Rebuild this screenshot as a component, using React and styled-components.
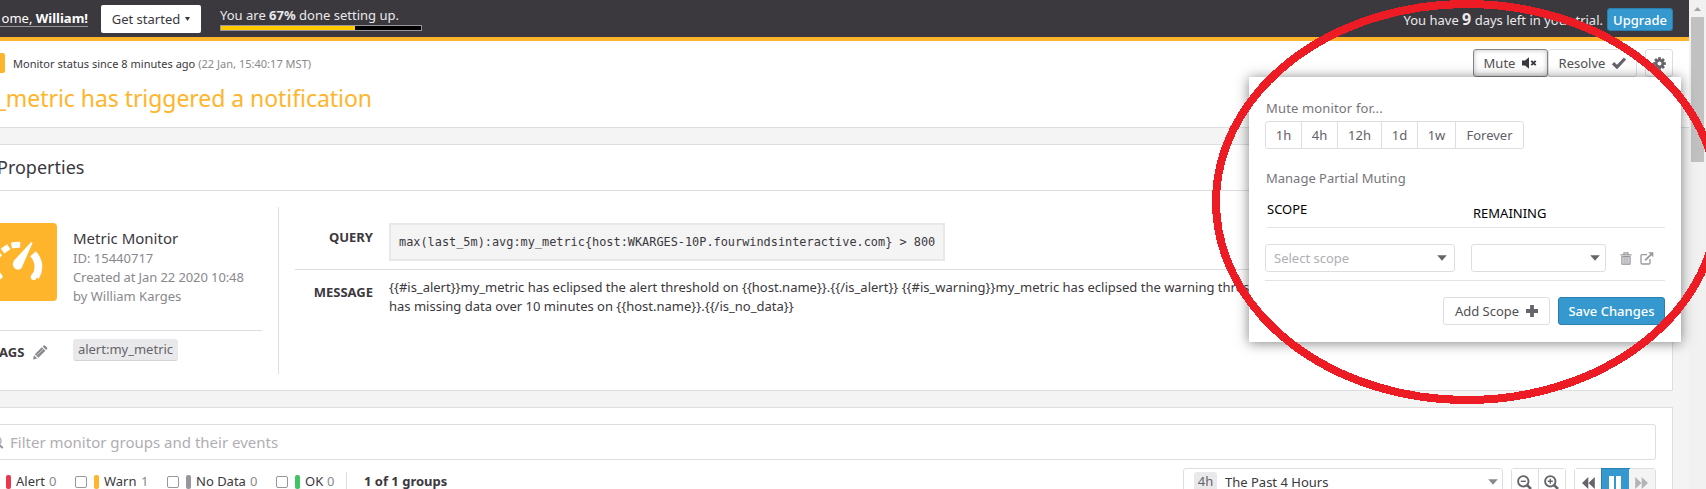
import React from "react";
import styled, { createGlobalStyle } from "styled-components";

const Global = createGlobalStyle`
  *, *::before, *::after { box-sizing: border-box; }
  body { margin: 0; background: #f4f4f4; overflow: hidden; }
  svg { display: block; flex: none; }
`;

const Page = styled.div`
  position: relative;
  display: flex;
  width: 1706px;
  height: 489px;
  overflow: hidden;
  font-family: "Noto Sans", sans-serif;
  font-size: 13px;
  color: #3b383e;
  background: #f4f4f4;
  white-space: pre;
`;

const Main = styled.div`
  width: 1689px;
  flex: none;
  overflow: hidden;
`;

const Text = styled.span`
  display: block;
  flex: none;
  white-space: pre;
  font-size: ${(p) => p.$size || 13}px;
  font-weight: ${(p) => p.$weight || 400};
  line-height: ${(p) => p.$lh || 19}px;
  color: ${(p) => p.$color || "inherit"};
  letter-spacing: ${(p) => p.$ls || 0}px;
`;

/* top bar */
const TopBar = styled.header`
  display: flex;
  align-items: flex-start;
  height: 41px;
  background: #3b383e;
  border-bottom: 4px solid #ffb52b;
  color: #e9e9ea;
`;

const Welcome = styled.div`
  width: 88px;
  height: 18px;
  margin-top: 9px;
  line-height: 18px;
  font-size: 13px;
  display: flex;
  justify-content: flex-end;
  color: #fff;
  border-bottom: 1px solid #98969c;
`;

const GetStarted = styled.button`
  display: flex;
  align-items: center;
  justify-content: center;
  gap: 5px;
  width: 100px;
  height: 28px;
  margin: 5px 0 0 13px;
  padding: 0;
  border: 0;
  border-radius: 2px;
  background: #fff;
  color: #3b383e;
  font: 13px "Noto Sans", sans-serif;
`;

const Setup = styled.div`
  margin: 6px 0 0 19px;
  width: 202px;
`;

const Progress = styled.div`
  width: 202px;
  height: 6px;
  background: #000;
  border: 1px solid #98969c;
`;

const Fill = styled.div`
  width: 67%;
  height: 100%;
  background: #ffcc00;
`;

const Trial = styled.div`
  margin: 8px 16px 0 auto;
  display: flex;
  align-items: center;
  gap: 4px;
  height: 23px;
`;

const Nine = styled.b`
  font-size: 16px;
  line-height: 19px;
`;

const Button = styled.button`
  display: flex;
  align-items: center;
  justify-content: center;
  flex: none;
  gap: 7px;
  width: ${(p) => p.$w}px;
  height: ${(p) => p.$h || 28}px;
  padding: 0;
  border: 1px solid ${(p) => (p.$primary ? "#2980b0" : p.$active ? "#85838a" : "#dedee1")};
  border-radius: 3px;
  background: ${(p) => (p.$primary ? "#3598cf" : "#fff")};
  box-shadow: ${(p) => (p.$active ? "inset 0 0 5px rgba(0,0,0,.25)" : "none")};
  color: ${(p) => (p.$primary ? "#fff" : "#515053")};
  font: ${(p) => (p.$primary ? 500 : 400)} 13px "Noto Sans", sans-serif;
`;

/* monitor heading */
const Heading = styled.section`
  display: flex;
  justify-content: space-between;
  height: 87px;
  padding-right: 16px;
  background: #fff;
  border-bottom: 1px solid #dedee1;
`;

const StatusRow = styled.div`
  display: flex;
  align-items: center;
  height: 20px;
  margin-top: 12px;
`;

const StatusTag = styled.div`
  width: 5px;
  height: 20px;
  margin-right: 8px;
  border-radius: 0 2px 2px 0;
  background: #ffb52b;
`;

const Title = styled.h1`
  margin: 6px 0 0;
  width: 372px;
  display: flex;
  justify-content: flex-end;
  font-size: 23px;
  line-height: 38px;
  font-weight: 400;
  letter-spacing: -0.05px;
  color: #ffb52b;
`;

const Actions = styled.div`
  display: flex;
  margin-top: 8px;
`;

const GearSlot = styled.div`
  margin-left: 8px;
`;

/* cards */
const Card = styled.section`
  width: 1673px;
  height: ${(p) => p.$h}px;
  margin-top: 16px;
  background: #fff;
  border: 1px solid #dedee1;
  border-left: 0;
`;

const CardHeader = styled.div`
  display: flex;
  align-items: center;
  height: 46px;
  padding-bottom: 2px;
  border-bottom: 1px solid #dedee1;
`;

const CardTitle = styled.h2`
  margin: 0 0 0 -3px;
  font-size: 18px;
  font-weight: 400;
  line-height: 26px;
`;

const CardBody = styled.div`
  display: flex;
  padding: 16px 16px 0 0;
`;

const Summary = styled.div`
  width: 279px;
  height: 167px;
  padding: 16px 16px 0 0;
  border-right: 1px solid #dedee1;
`;

const Identity = styled.div`
  display: flex;
  height: 108px;
  border-bottom: 1px solid #dedee1;
`;

const Tile = styled.div`
  width: 57px;
  height: 78px;
  margin-right: 16px;
  border-radius: 0 4px 4px 0;
  background: #ffb52b;
  overflow: hidden;
`;

const Facts = styled.div`
  padding-top: 5px;
`;

const Tags = styled.div`
  display: flex;
  align-items: flex-start;
  padding-top: 8px;
`;

const TagsLabel = styled.div`
  display: flex;
  width: 73px;
  gap: 9px;
  align-items: center;
  padding-top: 4px;
`;

const TagsName = styled(Text)`
  margin-left: -1px;
`;

const Tag = styled.div`
  width: 105px;
  height: 22px;
  text-align: center;
  background: #e9e9eb;
  border-bottom: 1px solid #d3d3d6;
  border-radius: 3px;
  line-height: 20px;
  color: #66646a;
`;

const Details = styled.div`
  flex: 1;
  padding: 16px 0 0 16px;
`;

const DetailRow = styled.div`
  display: flex;
  gap: 16px;
  height: ${(p) => p.$h}px;
  border-bottom: ${(p) => (p.$line ? "1px solid #dedee1" : "0")};
`;

const DetailLabel = styled.div`
  width: 78px;
  padding-top: ${(p) => p.$top}px;
  display: flex;
  justify-content: flex-end;
`;

const Code = styled.code`
  width: 556px;
  height: 38px;
  padding-left: 8px;
  border: 2px solid #e8e8e9;
  background: #f4f4f4;
  font: 11.88px/34px "DejaVu Sans Mono", monospace;
`;

const Message = styled.div`
  padding-top: 8px;
`;

/* filter card */
const FilterBox = styled.div`
  display: flex;
  align-items: center;
  width: 1656px;
  height: 36px;
  margin-top: 16px;
  border: 1px solid #dedee1;
  border-left: 0;
  border-radius: 0 3px 3px 0;
`;

const FilterIcon = styled.div`
  width: 10px;
  height: 14px;
`;

const Controls = styled.div`
  display: flex;
  align-items: flex-start;
  width: 1656px;
  margin-top: 8px;
`;

const Legend = styled.div`
  display: flex;
  align-items: center;
  height: 27px;
  padding-left: 6px;
`;

const LegendItem = styled.div`
  display: flex;
  align-items: center;
  width: ${(p) => p.$w}px;
`;

const Check = styled.span`
  width: 12px;
  height: 12px;
  margin-right: 7px;
  border: 1px solid #98969c;
  border-radius: 2px;
`;

const Swatch = styled.span`
  width: 5px;
  height: 14px;
  margin-right: 5px;
  border-radius: 2px;
  background: ${(p) => p.$color};
`;

const Name = styled.span`
  width: ${(p) => p.$w}px;
  line-height: 18px;
  padding-bottom: 1px;
`;

const Count = styled.span`
  line-height: 18px;
  padding-bottom: 1px;
  color: #8a888e;
`;

const Groups = styled.div`
  display: flex;
  align-items: center;
  height: 30px;
  margin-top: 4px;
  padding: 0 0 12px 17px;
  border-left: 1px solid #dedee1;
`;

const TimeSelect = styled.div`
  display: flex;
  align-items: center;
  width: 320px;
  height: 29px;
  margin-left: auto;
  padding: 0 4px 1px 10px;
  border: 1px solid #dedee1;
  border-radius: 3px;
`;

const Chip = styled.div`
  width: 23px;
  height: 20px;
  margin-right: 8px;
  border-radius: 3px;
  background: #e9e9eb;
  color: #66646a;
  text-align: center;
  line-height: 19px;
`;

const Push = styled.div`
  margin-left: auto;
`;

const IconGroup = styled.div`
  display: flex;
  height: 29px;
  margin-left: 8px;
  border: 1px solid #dedee1;
  border-radius: 3px;
`;

const IconCell = styled.div`
  display: flex;
  align-items: center;
  justify-content: center;
  width: ${(p) => p.$w}px;
  padding-right: 1px;
  background: ${(p) => p.$bg || "#fff"};
  border-right: ${(p) => (p.$line ? "1px solid #dedee1" : "0")};
  box-shadow: ${(p) => (p.$on ? "0 0 0 1px #2980b0" : "none")};
`;

/* mute popup */
const Popup = styled.aside`
  position: absolute;
  left: 1249px;
  top: 77px;
  width: 432px;
  height: 265px;
  padding: 22px 16px 0;
  background: #fff;
  box-shadow: 0 1px 12px rgba(0, 0, 0, 0.5);
`;

const PopupLabel = styled(Text)`
  margin-left: 1px;
  color: #77757b;
`;

const Durations = styled.div`
  display: flex;
  width: 259px;
  height: 28px;
  margin: 3px 0 20px;
  border: 1px solid #dedee1;
  border-radius: 3px;
`;

const Duration = styled.div`
  width: ${(p) => p.$w}px;
  text-align: center;
  line-height: 26px;
  color: #626066;
  & + & { border-left: 1px solid #dedee1; }
`;

const ScopeHead = styled.div`
  display: flex;
  height: 40px;
  margin: 0 0 16px 2px;
  padding-top: 12px;
  border-bottom: 1px solid #e3e3e5;
  color: #000;
`;

const HeadCell = styled.div`
  width: ${(p) => p.$w}px;
  padding-top: ${(p) => p.$top || 0}px;
`;

const ScopeRow = styled.div`
  display: flex;
  align-items: flex-start;
  height: 37px;
  border-bottom: 1px solid #e3e3e5;
`;

const Select = styled.div`
  display: flex;
  align-items: center;
  justify-content: space-between;
  width: ${(p) => p.$w}px;
  height: 28px;
  margin-right: 16px;
  padding: 0 ${(p) => p.$pr}px 0 8px;
  border: 1px solid #dedee1;
  border-radius: 3px;
`;

const RowIcons = styled.div`
  display: flex;
  align-items: center;
  height: 28px;
  gap: 8px;
  margin-left: -2px;
`;

const Footer = styled.div`
  display: flex;
  justify-content: flex-end;
  gap: 8px;
  margin-top: 16px;
`;

/* scrollbar */
const Scrollbar = styled.div`
  width: 17px;
  padding: 7px 2px 0;
  background: #f1f1f1;
`;

const Thumb = styled.div`
  width: 13px;
  height: 145px;
  margin-top: 6px;
  background: #c1c1c1;
`;

const Annotation = styled.svg`
  position: absolute;
  left: 0;
  top: 0;
  pointer-events: none;
`;

const Caret = ({ color = "#66646a" }) => (
  <svg width="10" height="6" viewBox="0 0 10 6"><path d="M.2 .3H9.8L5 5.7Z" fill={color} /></svg>
);

const MuteIcon = () => (
  <svg width="15" height="12" viewBox="0 0 15 12">
    <path d="M0 3.5H3L7 .3V11.7L3 8.5H0Z" fill="#3b383e" />
    <path d="M9.3 3.8l4.4 4.4M13.7 3.8L9.3 8.2" stroke="#3b383e" strokeWidth="1.9" />
  </svg>
);

const CheckIcon = () => (
  <svg width="14" height="12" viewBox="0 0 14 12">
    <path d="M1 6.2L5 10L13 1.5" fill="none" stroke="#66646a" strokeWidth="3.2" />
  </svg>
);

const GearIcon = () => (
  <svg width="13" height="13" viewBox="-6.5 -6.5 13 13">
    <g fill="#66646a">
      {[0, 45, 90, 135].map((a) => (
        <rect key={a} x="-1.4" y="-6.3" width="2.8" height="12.6" transform={`rotate(${a})`} />
      ))}
      <circle r="4.6" />
    </g>
    <circle r="2" fill="#fff" />
  </svg>
);

const PlusIcon = () => (
  <svg width="12" height="12" viewBox="0 0 12 12">
    <path d="M6 0V12M0 6H12" stroke="#66646a" strokeWidth="3.8" />
  </svg>
);

const TrashIcon = () => (
  <svg width="12" height="13" viewBox="0 0 12 13">
    <path d="M.5 2.8H11.5M4 2.5V.8H8V2.5" fill="none" stroke="#98969c" strokeWidth="1.2" />
    <path d="M1.8 4.5H10.2V12.3H1.8Z" fill="#d5d4d7" stroke="#98969c" />
    <path d="M4.2 5V12M6 5V12M7.8 5V12" stroke="#aaa8ad" strokeWidth=".7" />
  </svg>
);

const ExternalIcon = () => (
  <svg width="14" height="13" viewBox="0 0 14 13">
    <path d="M7 2.6H2.2Q1 2.6 1 3.8V10.8Q1 12 2.2 12H8.8Q10 12 10 10.8V7" fill="none" stroke="#98969c" strokeWidth="1.3" />
    <path d="M5 8.3L11 2.6" stroke="#98969c" strokeWidth="1.7" />
    <path d="M8.3 .3H13.3V5.3Z" fill="#98969c" />
  </svg>
);

const PencilIcon = () => (
  <svg width="15" height="15" viewBox="0 0 15 15">
    <path d="M0 14.5L1 10.2L4.3 13.5ZM1.8 9.2L8.8 2.2L12.4 5.8L5.3 12.8ZM9.7 1.4L10.6 .5Q11.4 -.1 12.3 .7L14 2.4Q14.7 3.2 14 4.1L13.2 5Z" fill="#8a888e" />
    <path d="M3.6 10.6L10.3 4" stroke="#fff" strokeWidth=".6" />
  </svg>
);

const GaugeIcon = () => (
  <svg width="57" height="78" viewBox="0 223 57 78">
    <g fill="none" stroke="#fff">
      <path d="M33 253.8Q42.5 264.5 35.5 277" strokeWidth="7.6" />
      <path d="M34.5 275.5L33.8 277" strokeWidth="6" strokeLinecap="round" />
      <path d="M11.5 245.6Q15.5 244.6 20.2 244.8" strokeWidth="5.8" />
      <path d="M2.5 251L8.8 246.8" strokeWidth="6" />
      <path d="M-5 262Q-3.5 256.5 .6 253.5" strokeWidth="5" />
      <path d="M-2 274L0 276.5" strokeWidth="5" strokeLinecap="round" />
    </g>
    <path d="M32 242.2L30.8 242.4L14 260.5Q11.5 265 14.5 268.3Q18 271 21.5 268.2L23 264.8L32.3 243.4Z" fill="#fff" />
  </svg>
);

const Magnifier = ({ plus }) => (
  <svg width="15" height="15" viewBox="0 0 15 15" fill="none" stroke="#66646a">
    <circle cx="6.3" cy="6.3" r="5.2" strokeWidth="1.9" />
    <path d="M10.2 10.2L14 14" strokeWidth="2.6" />
    <path d={plus ? "M3.8 6.3H8.8M6.3 3.8V8.8" : "M3.8 6.3H8.8"} strokeWidth="1.4" />
  </svg>
);

const Rewind = ({ color, flip }) => (
  <svg width="13" height="12" viewBox="0 0 13 12">
    <path d="M6.3 0V12L0 6ZM12.8 0V12L6.5 6Z" fill={color} transform={flip ? "translate(13 0) scale(-1 1)" : undefined} />
  </svg>
);

const durations = [["1h", 35], ["4h", 36], ["12h", 44], ["1d", 36], ["1w", 38], ["Forever", 68]];

const legend = [
  { name: "Alert", count: 0, color: "#eb364b", w: 69, nameW: 33 },
  { name: "Warn", count: 1, color: "#ffb52b", w: 92, nameW: 37, check: true },
  { name: "No Data", count: 0, color: "#98969c", w: 109, nameW: 54, check: true },
  { name: "OK", count: 0, color: "#41c464", w: 70, nameW: 22, check: true },
];

export default function App() {
  return (
    <Page>
      <Global />
      <Main>
        <TopBar>
          <Welcome>ome, <b>William!</b></Welcome>
          <GetStarted>
            <span>Get started</span>
            <svg width="5" height="4" viewBox="0 0 5 4"><path d="M0 0H5L2.5 4Z" fill="#3b383e" /></svg>
          </GetStarted>
          <Setup>
            <Text>You are <b>67%</b> done setting up.</Text>
            <Progress><Fill /></Progress>
          </Setup>
          <Trial>
            <Text>You have <Nine>9</Nine> days left in your trial.</Text>
            <Button $primary $w={66} $h={23}>Upgrade</Button>
          </Trial>
        </TopBar>

        <Heading>
          <div>
            <StatusRow>
              <StatusTag />
              <Text $size={11} $ls={0.02}>Monitor status since 8 minutes ago </Text>
              <Text $size={11} $ls={0.02} $color="#8a888e">(22 Jan, 15:40:17 MST)</Text>
            </StatusRow>
            <Title>_metric has triggered a notification</Title>
          </div>
          <Actions>
            <Button $w={75} $active><span>Mute</span><MuteIcon /></Button>
            <Button $w={89}><span>Resolve</span><CheckIcon /></Button>
            <GearSlot><Button $w={28}><GearIcon /></Button></GearSlot>
          </Actions>
        </Heading>

        <Card $h={247}>
          <CardHeader><CardTitle>Properties</CardTitle></CardHeader>
          <CardBody>
            <Summary>
              <Identity>
                <Tile><GaugeIcon /></Tile>
                <Facts>
                  <Text $size={15} $lh={21}>Metric Monitor</Text>
                  <Text $color="#8a888e">ID: 15440717</Text>
                  <Text $color="#8a888e" $ls={-0.1}>Created at Jan 22 2020 10:48</Text>
                  <Text $color="#8a888e">by William Karges</Text>
                </Facts>
              </Identity>
              <Tags>
                <TagsLabel><TagsName $weight={700}>AGS</TagsName><PencilIcon /></TagsLabel>
                <Tag>alert:my_metric</Tag>
              </Tags>
            </Summary>
            <Details>
              <DetailRow $h={47} $line>
                <DetailLabel $top={5}><Text $weight={700}>QUERY</Text></DetailLabel>
                <Code>{"max(last_5m):avg:my_metric{host:WKARGES-10P.fourwindsinteractive.com} > 800"}</Code>
              </DetailRow>
              <DetailRow $h={60}>
                <DetailLabel $top={13}><Text $weight={700}>MESSAGE</Text></DetailLabel>
                <Message>
                  <Text>{"{{#is_alert}}my_metric has eclipsed the alert threshold on {{host.name}}.{{/is_alert}} {{#is_warning}}my_metric has eclipsed the warning thres"}</Text>
                  <Text>{"has missing data over 10 minutes on {{host.name}}.{{/is_no_data}}"}</Text>
                </Message>
              </DetailRow>
            </Details>
          </CardBody>
        </Card>

        <Card $h={120}>
          <FilterBox>
            <FilterIcon>
              <svg width="5" height="14" viewBox="0 0 5 14"><path d="M-2 9L2.8 13" stroke="#98969c" strokeWidth="2" /><circle cx="-4" cy="6" r="5" fill="none" stroke="#b5b3b8" strokeWidth="1.5" /></svg>
            </FilterIcon>
            <Text $size={15} $color="#b0aeb3">Filter monitor groups and their events</Text>
          </FilterBox>
          <Controls>
            <Legend>
              {legend.map((l) => (
                <LegendItem key={l.name} $w={l.w}>
                  {l.check && <Check />}
                  <Swatch $color={l.color} />
                  <Name $w={l.nameW}>{l.name}</Name>
                  <Count>{l.count}</Count>
                </LegendItem>
              ))}
            </Legend>
            <Groups><Text $weight={700}>1 of 1 groups</Text></Groups>
            <TimeSelect>
              <Chip>4h</Chip>
              <Text>The Past 4 Hours</Text>
              <Push><Caret color="#8a888e" /></Push>
            </TimeSelect>
            <IconGroup>
              <IconCell $w={27} $line><Magnifier /></IconCell>
              <IconCell $w={26}><Magnifier plus /></IconCell>
            </IconGroup>
            <IconGroup>
              <IconCell $w={27}><Rewind color="#66646a" /></IconCell>
              <IconCell $w={27} $bg="#3598cf" $on>
                <svg width="12" height="13" viewBox="0 0 12 13"><path d="M0 0H5V13H0ZM7 0H12V13H7Z" fill="#fff" /></svg>
              </IconCell>
              <IconCell $w={26} $bg="#f4f4f4"><Rewind color="#b5b3b8" flip /></IconCell>
            </IconGroup>
          </Controls>
        </Card>
      </Main>

      <Scrollbar>
        <svg width="13" height="4" viewBox="0 0 13 4"><path d="M3 4L6.5 0L10 4Z" fill="#a3a3a3" /></svg>
        <Thumb />
      </Scrollbar>

      <Popup>
        <PopupLabel $color="#77757b" $ls={0.15}>Mute monitor for...</PopupLabel>
        <Durations>
          {durations.map(([t, w]) => <Duration key={t} $w={w}>{t}</Duration>)}
        </Durations>
        <PopupLabel $color="#77757b">Manage Partial Muting</PopupLabel>
        <ScopeHead>
          <HeadCell $w={206}><Text>SCOPE</Text></HeadCell>
          <HeadCell $w={100} $top={4}><Text>REMAINING</Text></HeadCell>
        </ScopeHead>
        <ScopeRow>
          <Select $w={190} $pr={7}><Text $color="#b0aeb3">Select scope</Text><Caret /></Select>
          <Select $w={135} $pr={5}><span /><Caret /></Select>
          <RowIcons><TrashIcon /><ExternalIcon /></RowIcons>
        </ScopeRow>
        <Footer>
          <Button $w={107}><span>Add Scope</span><PlusIcon /></Button>
          <Button $w={107} $primary>Save Changes</Button>
        </Footer>
      </Popup>

      <Annotation width="1706" height="489" viewBox="0 0 1706 489">
        <ellipse cx="1467" cy="202" rx="251" ry="198" fill="none" stroke="#ed1c24" strokeWidth="8" shapeRendering="crispEdges" />
      </Annotation>
    </Page>
  );
}
